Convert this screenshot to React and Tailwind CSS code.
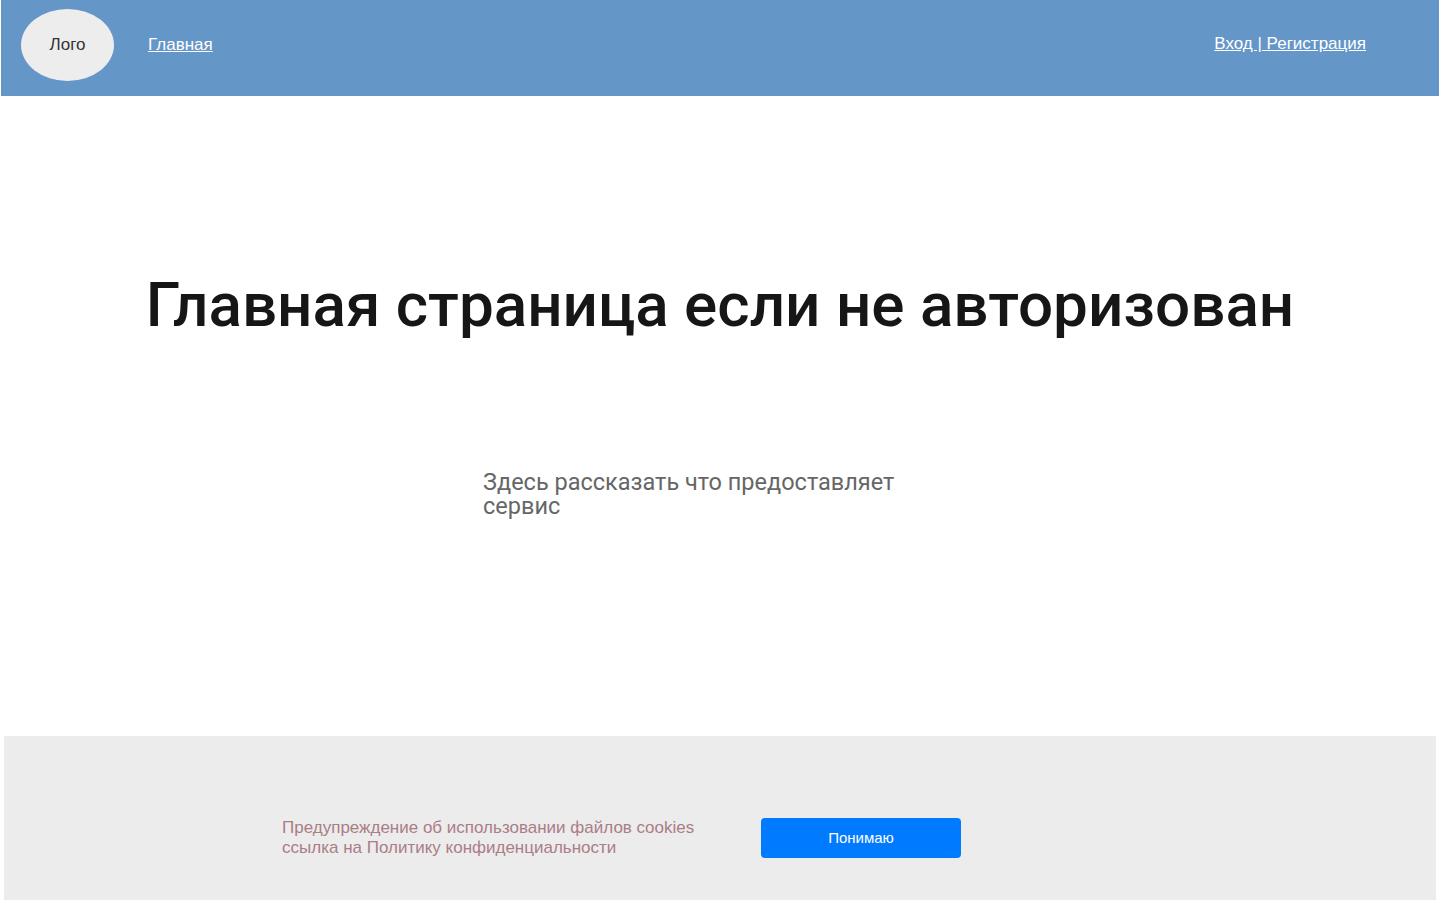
import React from "react";

const Header = () => (
  <header className="mx-[1px] flex h-[96px] items-start bg-[#6596c8] font-['Liberation_Sans',Arial,sans-serif] text-[17px]">
    <div className="ml-[20px] mt-[9px] flex h-[72px] w-[93px] items-center justify-center rounded-[50%] bg-[#ededed] text-[#333]">
      Лого
    </div>
    <a href="#" className="ml-[34px] mt-[32px] text-white underline">
      Главная
    </a>
    <a href="#" className="ml-auto mr-[73px] mt-[31px] text-white underline">
      Вход | Регистрация
    </a>
  </header>
);

const CookieBar = () => (
  <footer className="mx-[4px] flex h-[164px] items-start bg-[#ececec] pt-[82px] font-['Liberation_Sans',Arial,sans-serif]">
    <div className="ml-[278px] w-[460px] text-[17px] leading-5 text-[#ab7d86]">
      <p>Предупреждение об использовании файлов cookies</p>
      <p>ссылка на Политику конфиденциальности</p>
    </div>
    <button className="ml-[19px] h-[40px] w-[200px] rounded-[4px] bg-[#007bff] text-[15px] text-white">
      Понимаю
    </button>
  </footer>
);

export default function App() {
  return (
    <div className="flex min-h-screen flex-col bg-white">
      <Header />
      <main className="flex flex-1 flex-col items-center font-['Roboto',sans-serif]">
        <h1 className="mt-[169px] text-center text-[62px] leading-[80px] font-medium text-[#161616]">
          Главная страница если не авторизован
        </h1>
        <p className="mt-[125px] w-[474px] text-[23.5px] leading-6 text-[#666]">
          Здесь рассказать что предоставляет сервис
        </p>
      </main>
      <CookieBar />
    </div>
  );
}
